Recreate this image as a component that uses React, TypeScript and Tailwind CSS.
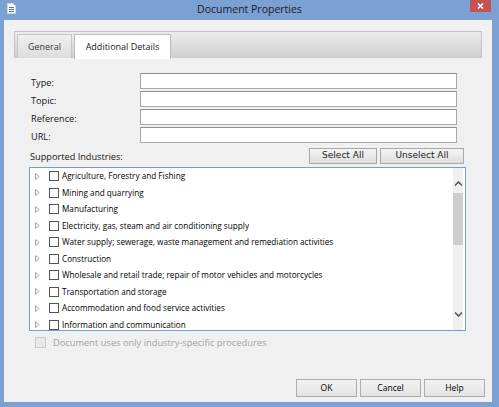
import React from 'react';

const industries = [
  'Agriculture, Forestry and Fishing',
  'Mining and quarrying',
  'Manufacturing',
  'Electricity, gas, steam and air conditioning supply',
  'Water supply; sewerage, waste management and remediation activities',
  'Construction',
  'Wholesale and retail trade; repair of motor vehicles and motorcycles',
  'Transportation and storage',
  'Accommodation and food service activities',
  'Information and communication',
];

const fields = ['Type:', 'Topic:', 'Reference:', 'URL:'];

function DocIcon() {
  return (
    <svg width="9" height="11" viewBox="0 0 9 11">
      <path d="M0.5 0.5 H6 L8.5 3 V10.5 H0.5 Z" fill="#ffffff" stroke="#c9d6e8" />
      <path d="M2 4.5 H7 M2 6.5 H7 M2 8.5 H7" stroke="#3f78c4" strokeWidth="1" />
    </svg>
  );
}

function Expander() {
  return (
    <svg width="5" height="7" viewBox="0 0 5 7">
      <path d="M0.5 0.5 L4.2 3.5 L0.5 6.5 Z" fill="none" stroke="#a6a6a6" strokeWidth="1" />
    </svg>
  );
}

function Chevron({ up }: { up?: boolean }) {
  return (
    <svg width="9" height="5" viewBox="0 0 9 5">
      <path d={up ? 'M1 4.5 L4.5 1 L8 4.5' : 'M1 0.5 L4.5 4 L8 0.5'} fill="none" stroke="#5a5a5a" strokeWidth="1.6" />
    </svg>
  );
}

function DialogButton({ label }: { label: string }) {
  return (
    <button className="w-[61px] h-[18px] border border-[#acacac] bg-gradient-to-b from-[#f2f2f2] to-[#e3e3e3] text-[8.5px] text-black flex items-center justify-center">
      {label}
    </button>
  );
}

export default function App() {
  return (
    <div className="w-[499px] h-[407px] bg-[#7ba0d2] overflow-hidden flex flex-col" style={{ fontFamily: '"Open Sans", "Noto Sans", sans-serif' }}>
      {/* title bar */}
      <div className="h-[20px] flex items-start relative shrink-0">
        <div className="pl-[7px] pt-[3px]">
          <DocIcon />
        </div>
        <div className="absolute left-0 right-0 top-0 h-[19px] flex items-center justify-center text-[10.5px] text-[#1b1b1b]">
          Document Properties
        </div>
        <div className="absolute left-[470px] top-0 w-[21px] h-[12px] bg-[#c75050] flex items-center justify-center">
          <svg width="7" height="6" viewBox="0 0 7 6">
            <path d="M1 0.5 L6 5.5 M6 0.5 L1 5.5" stroke="#ffffff" strokeWidth="1.6" />
          </svg>
        </div>
      </div>

      <div className="flex h-[382px]">
        <div className="w-[4px]" />
        {/* client */}
        <div className="w-[488px] h-full bg-[#f0f0f0] flex flex-col">
          {/* tab strip */}
          <div className="mt-[11px] mx-[10px] h-[27px] border border-[#c2c2c2] border-b-0 bg-gradient-to-b from-[#ececec] to-[#cfcfcf] flex items-end pl-[2px]">
            <div className="w-[55px] h-[24px] border border-[#c5c5c5] border-b-0 bg-gradient-to-b from-[#f0f0f0] to-[#dcdcdc] flex items-center justify-center text-[9px] text-[#3a3a3a]">
              General
            </div>
            <div className="ml-[2px] w-[97px] h-[25px] -mb-[1px] border border-[#bcbcbc] border-b-0 bg-white flex items-center justify-center text-[9px] text-[#1b1b1b]">
              Additional Details
            </div>
          </div>

          {/* fields */}
          <div className="mt-[15px] flex flex-col gap-[2px] pl-[27px]">
            {fields.map((f) => (
              <div key={f} className="flex items-center h-[16px]">
                <span className="w-[109px] pt-[3px] text-[9.2px] text-[#141414]">{f}</span>
                <div className="w-[317px] h-[16px] bg-white border border-[#a8a8a8] border-t-[#8f8f8f]" />
              </div>
            ))}
          </div>

          {/* industries header */}
          <div className="mt-[5px] flex items-center h-[16px] pl-[26px] pr-[28px]">
            <span className="pt-[1px] text-[9.2px] text-[#141414]">Supported Industries:</span>
            <div className="ml-auto flex gap-[3px]" style={{ fontFamily: '"DejaVu Sans", sans-serif' }}>
              <button className="w-[68px] h-[16px] border border-[#a8a8a8] bg-gradient-to-b from-[#f4f4f4] to-[#dedede] text-[9px] text-[#222222]">
                Select All
              </button>
              <button className="w-[84px] h-[16px] border border-[#a8a8a8] bg-gradient-to-b from-[#f4f4f4] to-[#dedede] text-[9px] text-[#222222]">
                Unselect All
              </button>
            </div>
          </div>

          {/* list box */}
          <div className="mt-[3px] ml-[25px] w-[437px] h-[164px] border border-[#7f9cc0] bg-white flex">
            <div className="flex-1 flex flex-col overflow-hidden">
              {industries.map((item) => (
                <div key={item} className="h-[16.5px] shrink-0 flex items-center">
                  <div className="w-[19px] flex justify-end pr-[9px]">
                    <Expander />
                  </div>
                  <div className="w-[10px] h-[10px] border border-[#555555] bg-white" />
                  <span className="ml-[3px] text-[8.2px] text-black whitespace-nowrap">{item}</span>
                </div>
              ))}
            </div>
            <div className="w-[10px] mr-[2px] bg-[#f0f0f0] flex flex-col">
              <div className="h-[25px] flex flex-col items-center justify-end pb-[7px]">
                <Chevron up />
              </div>
              <div className="h-[52px] bg-[#cdcdcd]" />
              <div className="flex-1" />
              <div className="h-[25px] flex flex-col items-center pt-[7px]">
                <Chevron />
              </div>
            </div>
          </div>

          {/* option */}
          <div className="mt-[6px] ml-[31px] flex items-center h-[11px]">
            <div className="w-[11px] h-[11px] border border-[#c9c9c9] bg-[#e9e9e9]" />
            <span className="ml-[7px] text-[9.3px] text-[#a3a3a3]">Document uses only industry-specific procedures</span>
          </div>

          <div className="flex-1" />

          {/* buttons */}
          <div className="flex justify-end gap-[3px] pr-[7px] pb-[5px]">
            <DialogButton label="OK" />
            <DialogButton label="Cancel" />
            <DialogButton label="Help" />
          </div>
        </div>
      </div>
    </div>
  );
}
